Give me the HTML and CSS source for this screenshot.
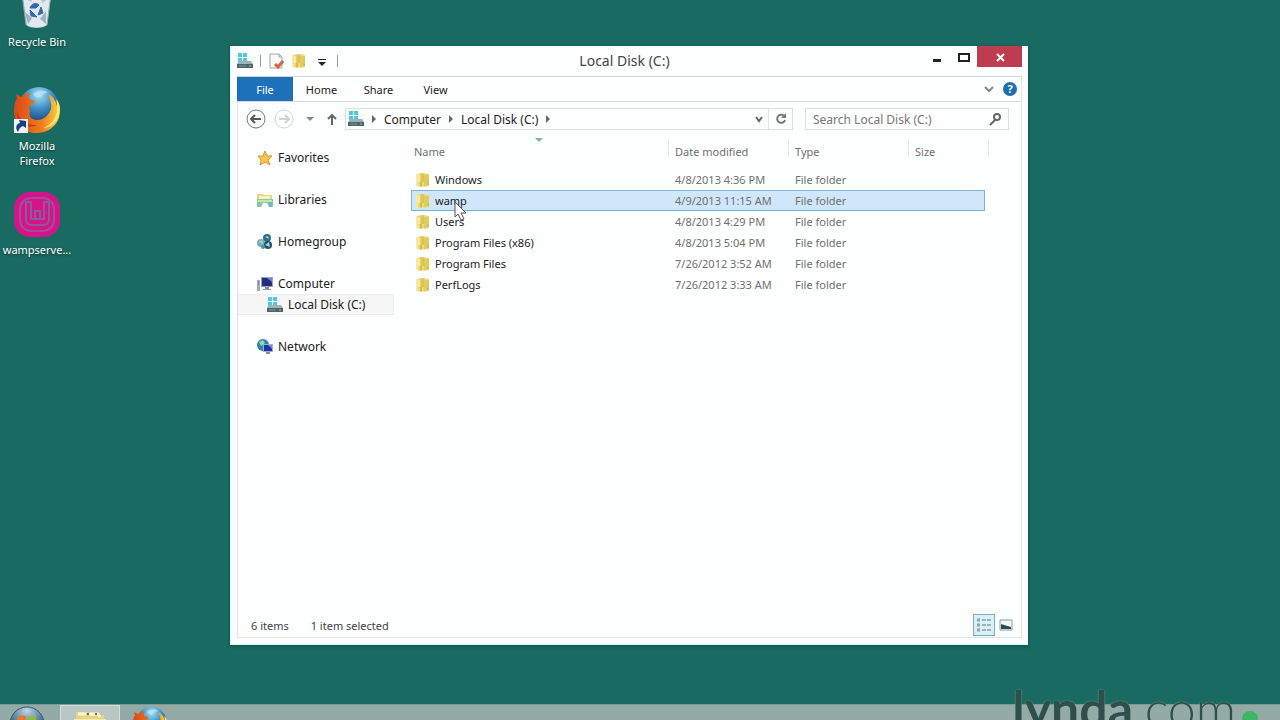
FILE: index.html
```html
<!DOCTYPE html>
<html lang="en">
<head>
    <meta charset="UTF-8">
    <meta name="viewport" content="width=device-width, initial-scale=1.0">
    <title>Local Disk (C:)</title>
    <link rel="stylesheet" href="styles.css">
</head>
<body>
    <!-- shared icons -->
    <svg class="sprite" aria-hidden="true">
        <defs>
            <linearGradient id="gold" x1="0" x2="1">
                <stop offset="0" stop-color="#f8efae"/>
                <stop offset="1" stop-color="#dfc64f"/>
            </linearGradient>
            <linearGradient id="fox" x1="0" x2="1">
                <stop offset="0" stop-color="#d9481a"/>
                <stop offset="0.6" stop-color="#ef7d1c"/>
                <stop offset="1" stop-color="#f8d447"/>
            </linearGradient>
            <radialGradient id="globe" cx="0.5" cy="0.2" r="0.8">
                <stop offset="0" stop-color="#a9e0f5"/>
                <stop offset="0.45" stop-color="#3b8cc4"/>
                <stop offset="1" stop-color="#0d2c66"/>
            </radialGradient>
            <radialGradient id="orb" cx="0.5" cy="0.1" r="0.9">
                <stop offset="0" stop-color="#c3d6e0"/>
                <stop offset="0.5" stop-color="#56809c"/>
                <stop offset="1" stop-color="#12375c"/>
            </radialGradient>
        </defs>
        <symbol id="i-disk" viewBox="0 0 16 16">
            <path d="M1 0h4v4H1zM6 0h4v4H6zM1 5h4v4H1zM6 5h4v4H6z" fill="#4cc9e6"/>
            <path d="M2 8h12l2 3H0z" fill="#9fb2b8"/>
            <path d="M0 11h16v4H0z" fill="#4f646b"/>
            <path d="M2 13h7" stroke="#7f979e"/>
            <path d="M12 13h2" stroke="#67e08a"/>
        </symbol>
        <symbol id="i-folder" viewBox="0 0 16 16">
            <path d="M1 2l6-1v14l-6-1z" fill="url(#gold)"/>
            <path d="M7 3l2-2 5 1v12l-5 1-2-1z" fill="#ecd978"/>
            <path d="M9 3v11l5-1V3z" fill="#e3cb5b"/>
            <path d="M8 1v9M6 10v4" stroke="#c9ac39"/>
            <path d="M4 3v7" stroke="#fffad7"/>
            <path d="M13 10v3" stroke="#93b7a3"/>
        </symbol>
        <symbol id="i-firefox" viewBox="0 0 48 48">
            <circle cx="26" cy="21" r="20" fill="url(#globe)"/>
            <path d="M20 8c4-4 11-5 15-1-4 0-5 2-8 4-3 1-5 0-7-3z" fill="#bfe6f3" opacity="0.7"/>
            <path d="M3 8l5 3c3-3 7-4 10-4-2 2-3 4-2 6l6 2c-1 3-4 4-6 6l1 5c-2 3 1 8 7 8 7 0 12-5 14-11 1-6-1-10-3-15 6 3 8 8 9 12 0-2 0-4-1-6 4 6 5 14 2 20-4 9-13 13-22 13C10 47 1 38 1 25c0-6 1-11 3-12z" fill="url(#fox)"/>
            <path d="M43 13c4 12-1 25-13 29 7 0 14-5 16-13 2-6 1-12-3-16z" fill="#ffe66e"/>
            <path d="M4 25c2 9 10 15 20 14-7 4-18 0-20-8z" fill="#c6391a"/>
        </symbol>
    </svg>

    <main class="desktop">
        <nav class="shortcuts" aria-label="Desktop">
            <a class="shortcut" href="#">
                <svg class="shortcut-icon" viewBox="0 0 48 48" aria-hidden="true">
                    <path d="M8 4h31l-5 39c-4 4-17 4-21 0z" fill="#b4c6d2"/>
                    <path d="M10 15l8 5 5-8 7 9 8-7-4 29c-5 3-16 3-20 0z" fill="#e0e9ef"/>
                    <path d="M12 30l7 6-4 6zM33 29l-6 8 6 5z" fill="#9fb3bf"/>
                    <path d="M17 26c1-4 6-6 9-3l-3 3zM28 25l2 6-5 2zM24 35l-6-1-1-6z" fill="#3569b4" stroke="#3569b4"/>
                    <path d="M8 4l5 39M39 4l-5 39" stroke="#8aa3ad" fill="none"/>
                </svg>
                <span>Recycle Bin</span>
            </a>
            <a class="shortcut" href="#">
                <svg class="shortcut-icon" viewBox="0 0 48 48" aria-hidden="true">
                    <use href="#i-firefox"/>
                    <path d="M1 33h14v14H1z" fill="#eef3f7"/>
                    <path d="M5 46c-3-4-2-8 2-9l-1-3 7 1v7l-3-2c-3 1-4 3-5 6z" fill="#1d3f7c"/>
                </svg>
                <span>Mozilla<br>Firefox</span>
            </a>
            <a class="shortcut" href="#">
                <svg class="shortcut-icon" viewBox="0 0 48 48" aria-hidden="true">
                    <rect x="1" y="2" width="46" height="45" rx="16" fill="#d5148c"/>
                    <rect x="7" y="8" width="34" height="33" rx="11" fill="none" stroke="#a44d96" stroke-width="2"/>
                    <path d="M13 12v17c0 4 2 6 6 6h11c4 0 6-2 6-6V12h-5v17H18V12zM22 29v-8h5v8" fill="none" stroke="#8a5b94" stroke-width="2"/>
                </svg>
                <span>wampserve...</span>
            </a>
        </nav>

        <section class="window">
            <header class="titlebar">
                <div class="quick">
                    <svg class="icon" aria-hidden="true"><use href="#i-disk"/></svg>
                    <i class="bar"></i>
                    <button class="plain" aria-label="Properties">
                        <svg class="icon" viewBox="0 0 16 16" aria-hidden="true">
                            <path d="M2 1h9l3 3v11H2z" fill="#fafafa" stroke="#a5a5a5"/>
                            <path d="M11 1v3h3" fill="none" stroke="#a5a5a5"/>
                            <path d="M7 11l3 3 5-6" fill="none" stroke="#d8654c" stroke-width="3"/>
                        </svg>
                    </button>
                    <button class="plain" aria-label="New folder">
                        <svg class="icon" aria-hidden="true"><use href="#i-folder"/></svg>
                    </button>
                    <button class="plain" aria-label="Customize toolbar">
                        <svg class="icon" viewBox="0 0 16 16" aria-hidden="true">
                            <path d="M4 6h8v1H4zM4 9h8l-4 4z" fill="#222"/>
                        </svg>
                    </button>
                    <i class="bar"></i>
                </div>
                <h1>Local Disk (C:)</h1>
                <div class="controls">
                    <button class="plain" aria-label="Minimize">
                        <svg class="icon" viewBox="0 0 16 16" aria-hidden="true"><path d="M4 9h8v3H4z" fill="#222"/></svg>
                    </button>
                    <button class="plain" aria-label="Maximize">
                        <svg class="icon" viewBox="0 0 16 16" aria-hidden="true"><path d="M3 4h10v7H3z" fill="none" stroke="#222" stroke-width="2"/></svg>
                    </button>
                    <button class="close" aria-label="Close">
                        <svg class="icon" viewBox="0 0 16 16" aria-hidden="true"><path d="M5 5l7 7M12 5l-7 7" stroke="#fff" stroke-width="2"/></svg>
                    </button>
                </div>
            </header>

            <div class="frame">
                <div class="ribbon">
                    <button class="tab file">File</button>
                    <button class="tab">Home</button>
                    <button class="tab">Share</button>
                    <button class="tab">View</button>
                    <div class="ribbon-end">
                        <button class="plain" aria-label="Expand the ribbon">
                            <svg class="icon" viewBox="0 0 16 16" aria-hidden="true"><path d="M4 6l4 4 4-4" fill="none" stroke="#888" stroke-width="2"/></svg>
                        </button>
                        <button class="help" aria-label="Help">?</button>
                    </div>
                </div>

                <div class="location">
                    <button class="plain" aria-label="Back">
                        <svg class="round" viewBox="0 0 20 20" aria-hidden="true">
                            <circle cx="10" cy="10" r="9" fill="none" stroke="#777"/>
                            <path d="M15 10H6M9 6l-4 4 4 4" fill="none" stroke="#555" stroke-width="2"/>
                        </svg>
                    </button>
                    <button class="plain" aria-label="Forward" disabled>
                        <svg class="round" viewBox="0 0 20 20" aria-hidden="true">
                            <circle cx="10" cy="10" r="9" fill="none" stroke="#d6d6d6"/>
                            <path d="M5 10h9M11 6l4 4-4 4" fill="none" stroke="#d2d2d2" stroke-width="2"/>
                        </svg>
                    </button>
                    <button class="plain" aria-label="Recent locations">
                        <svg class="icon" viewBox="0 0 16 16" aria-hidden="true"><path d="M4 6h8l-4 4z" fill="#888"/></svg>
                    </button>
                    <button class="plain" aria-label="Up">
                        <svg class="icon" viewBox="0 0 16 16" aria-hidden="true"><path d="M8 14V4M4 8l4-4 4 4" fill="none" stroke="#666" stroke-width="2"/></svg>
                    </button>
                    <div class="address">
                        <svg class="icon" aria-hidden="true"><use href="#i-disk"/></svg>
                        <svg class="arrow" viewBox="0 0 8 8" aria-hidden="true"><path d="M2 0l4 4-4 4z" fill="#666"/></svg>
                        <a href="#">Computer</a>
                        <svg class="arrow" viewBox="0 0 8 8" aria-hidden="true"><path d="M2 0l4 4-4 4z" fill="#666"/></svg>
                        <a href="#">Local Disk (C:)</a>
                        <svg class="arrow" viewBox="0 0 8 8" aria-hidden="true"><path d="M2 0l4 4-4 4z" fill="#666"/></svg>
                        <button class="plain history" aria-label="Previous locations">
                            <svg class="icon" viewBox="0 0 16 16" aria-hidden="true"><path d="M5 6l3 4 3-4" fill="none" stroke="#666" stroke-width="2"/></svg>
                        </button>
                        <button class="refresh" aria-label="Refresh">
                            <svg class="icon" viewBox="0 0 16 16" aria-hidden="true">
                                <path d="M11 5a4 4 0 1 0 1 4" fill="none" stroke="#777" stroke-width="2"/>
                                <path d="M13 2v5H8z" fill="#777"/>
                            </svg>
                        </button>
                    </div>
                    <div class="search">
                        <input type="text" placeholder="Search Local Disk (C:)" aria-label="Search Local Disk (C:)">
                        <svg class="icon" viewBox="0 0 16 16" aria-hidden="true">
                            <circle cx="10" cy="6" r="3" fill="none" stroke="#666" stroke-width="2"/>
                            <path d="M8 9l-5 5" stroke="#666" stroke-width="2"/>
                        </svg>
                    </div>
                </div>

                <div class="content">
                    <nav class="tree" aria-label="Navigation pane">
                        <a href="#">
                            <svg class="icon" viewBox="0 0 16 16" aria-hidden="true">
                                <path d="M8 1l2 5 5 0-4 4 2 5-5-3-5 3 1-5-3-4 5 0z" fill="#f9c74c" stroke="#dc9333"/>
                            </svg>
                            Favorites
                        </a>
                        <a href="#">
                            <svg class="icon" viewBox="0 0 16 16" aria-hidden="true">
                                <path d="M0 2h6l1 1h8v5H0z" fill="#e9d77a"/>
                                <path d="M2 4h11v3H2z" fill="#f8f3c6"/>
                                <path d="M0 7h16v8h-4l-2-4H6l-2 4H0z" fill="#8fc79b"/>
                                <path d="M1 8h14v2H1z" fill="#c7e6b8"/>
                                <path d="M12 10h3v5h-3z" fill="#75b9cc"/>
                            </svg>
                            Libraries
                        </a>
                        <a href="#">
                            <svg class="icon" viewBox="0 0 16 16" aria-hidden="true">
                                <circle cx="10" cy="4" r="4" fill="#356b8e"/>
                                <circle cx="4" cy="9" r="4" fill="#78aeb2"/>
                                <circle cx="11" cy="11" r="4" fill="#234f68"/>
                                <path d="M8 3l3-1 1 3zM2 8l3-2 1 4zM8 11l4-3 1 5z" fill="#a0d9d5"/>
                                <circle cx="6" cy="13" r="2" fill="#49969c"/>
                            </svg>
                            Homegroup
                        </a>
                        <a href="#" class="joined">
                            <svg class="icon" viewBox="0 0 16 16" aria-hidden="true">
                                <path d="M0 4h3v11H0z" fill="#a5a9bd"/>
                                <path d="M1 6h1M1 8h1" stroke="#5c617e"/>
                                <path d="M4 1h12v10H4z" fill="#99a2bf"/>
                                <path d="M5 2h10v8H5z" fill="#242d83"/>
                                <path d="M10 2h5v4z" fill="#6c86d4"/>
                                <path d="M8 11h4v2h2v1H6v-1h2z" fill="#8b92a9"/>
                            </svg>
                            Computer
                        </a>
                        <a href="#" class="drive" aria-current="true">
                            <svg class="icon" aria-hidden="true"><use href="#i-disk"/></svg>
                            Local Disk (C:)
                        </a>
                        <a href="#">
                            <svg class="icon" viewBox="0 0 16 16" aria-hidden="true">
                                <circle cx="6" cy="6" r="6" fill="#2d85a7"/>
                                <path d="M2 3l4-2 2 3-4 3zM2 9l3 2z" fill="#8fd4b6"/>
                                <path d="M6 5h10v8H6z" fill="#9bb2d3"/>
                                <path d="M7 6h8v6H7z" fill="#1f3596"/>
                                <path d="M11 6h4v4z" fill="#6b8ae0"/>
                                <path d="M9 13h4v2H9z" fill="#7d8da8"/>
                            </svg>
                            Network
                        </a>
                    </nav>

                    <div class="files">
                        <table>
                            <thead>
                                <tr>
                                    <th class="col-name">Name
                                        <svg class="sort" viewBox="0 0 8 4" aria-hidden="true"><path d="M0 0h8L4 4z" fill="#86aebe"/></svg>
                                    </th>
                                    <th class="col-date">Date modified</th>
                                    <th class="col-type">Type</th>
                                    <th>Size</th>
                                </tr>
                            </thead>
                            <tbody>
                                <tr>
                                    <td><svg class="icon" aria-hidden="true"><use href="#i-folder"/></svg>Windows</td>
                                    <td>4/8/2013 4:36 PM</td>
                                    <td>File folder</td>
                                    <td></td>
                                </tr>
                                <tr class="selected">
                                    <td><svg class="icon" aria-hidden="true"><use href="#i-folder"/></svg>wamp
                                        <svg class="pointer" viewBox="0 0 13 20" aria-hidden="true">
                                            <path d="M1 1v15l3-3 3 6 3-1-3-6h5z" fill="#fff" stroke="#555"/>
                                        </svg>
                                    </td>
                                    <td>4/9/2013 11:15 AM</td>
                                    <td>File folder</td>
                                    <td></td>
                                </tr>
                                <tr>
                                    <td><svg class="icon" aria-hidden="true"><use href="#i-folder"/></svg>Users</td>
                                    <td>4/8/2013 4:29 PM</td>
                                    <td>File folder</td>
                                    <td></td>
                                </tr>
                                <tr>
                                    <td><svg class="icon" aria-hidden="true"><use href="#i-folder"/></svg>Program Files (x86)</td>
                                    <td>4/8/2013 5:04 PM</td>
                                    <td>File folder</td>
                                    <td></td>
                                </tr>
                                <tr>
                                    <td><svg class="icon" aria-hidden="true"><use href="#i-folder"/></svg>Program Files</td>
                                    <td>7/26/2012 3:52 AM</td>
                                    <td>File folder</td>
                                    <td></td>
                                </tr>
                                <tr>
                                    <td><svg class="icon" aria-hidden="true"><use href="#i-folder"/></svg>PerfLogs</td>
                                    <td>7/26/2012 3:33 AM</td>
                                    <td>File folder</td>
                                    <td></td>
                                </tr>
                            </tbody>
                        </table>
                    </div>
                </div>

                <footer class="status">
                    <span>6 items</span>
                    <span>1 item selected</span>
                    <div class="views">
                        <button class="view active" aria-label="Details view">
                            <svg class="icon" viewBox="0 0 16 16" aria-hidden="true">
                                <path d="M1 3h3M1 8h3M1 13h3" stroke="#8ba4ae" stroke-width="3"/>
                                <path d="M6 3h4M11 3h4M6 8h4M11 8h4M6 13h4M11 13h4" stroke="#54788c"/>
                            </svg>
                        </button>
                        <button class="view" aria-label="Large icons view">
                            <svg class="icon" viewBox="0 0 16 16" aria-hidden="true">
                                <path d="M2 3h12v10H2z" fill="#f2f8f8" stroke="#8b9b9e"/>
                                <path d="M3 7l3 1 7 2v2H3z" fill="#284b4d"/>
                            </svg>
                        </button>
                    </div>
                </footer>
            </div>
        </section>
    </main>

    <div class="taskbar">
        <button class="task" aria-label="Start">
            <svg class="task-icon" viewBox="0 0 36 36" aria-hidden="true">
                <circle cx="18" cy="18" r="17" fill="url(#orb)" stroke="#38566d"/>
                <path d="M8 12c3-3 6-3 9-2v8c-3-1-6-1-9 1z" fill="#e07a3a"/>
                <path d="M18 10c3 1 6 1 9-1v8c-3 2-6 2-9 1z" fill="#8cbb4a"/>
                <path d="M8 20c3-2 6-2 9-1v8c-3-1-6-1-9 1z" fill="#3c8fd0"/>
                <path d="M18 19c3 1 6 1 9-1v8c-3 2-6 2-9 1z" fill="#f0c63d"/>
            </svg>
        </button>
        <button class="task open" aria-label="File Explorer">
            <svg class="task-icon" viewBox="0 0 36 36" aria-hidden="true">
                <path d="M4 5h11l2 3h15v23H4z" fill="#e3d58a"/>
                <path d="M6 7h8M17 7h9l2 3" stroke="#fbf6cf" stroke-width="3" fill="none"/>
                <path d="M15 7h2M23 7h2" stroke="#7f6d2a" stroke-width="2"/>
                <path d="M2 12h32v20H2z" fill="#f4e9a6"/>
            </svg>
        </button>
        <button class="task" aria-label="Mozilla Firefox">
            <svg class="task-icon" aria-hidden="true"><use href="#i-firefox"/></svg>
        </button>
    </div>

    <div class="watermark"><b>lynda</b>.com<i class="dot"></i></div>
</body>
</html>
```
FILE: styles.css
```css
* {
    box-sizing: border-box;
}

body {
    margin: 0;
    height: 100vh;
    overflow: hidden;
    position: relative;
    display: flex;
    flex-direction: column;
    background: #196a60;
    font-family: "Noto Sans", "Open Sans", sans-serif;
    font-size: 12px;
    color: #222;
}

button,
input {
    font: inherit;
    color: inherit;
    border: 0;
    padding: 0;
    background: none;
}

a {
    color: inherit;
    text-decoration: none;
}

svg {
    display: block;
    flex: none;
}

.sprite {
    position: absolute;
    width: 0;
    height: 0;
}

.icon {
    width: 16px;
    height: 16px;
}

.round {
    width: 20px;
    height: 20px;
}

.arrow {
    width: 8px;
    height: 8px;
}

.desktop {
    flex: 1;
    position: relative;
}

/* desktop shortcuts */
.shortcuts {
    display: grid;
    grid-auto-rows: 104px;
    width: 74px;
    margin-top: -18px;
}

.shortcut {
    display: flex;
    flex-direction: column;
    align-items: center;
    gap: 4px;
    color: #fff;
    font-size: 11px;
    line-height: 15px;
    text-align: center;
    text-shadow: 0 1px 2px #0b3a35;
}

.shortcut-icon {
    width: 48px;
    height: 48px;
}

/* explorer window */
.window {
    position: absolute;
    top: 46px;
    right: 252px;
    bottom: 59px;
    left: 230px;
    display: flex;
    flex-direction: column;
    padding: 0 6px 6px;
    background: #fdfefe;
    border-left: 1px solid #d5fbf8;
    border-bottom: 1px solid #d5fbf8;
    box-shadow: 0 1px 3px #0d5048;
}

.titlebar {
    display: grid;
    grid-template-columns: 1fr auto 1fr;
    height: 30px;
}

.titlebar h1 {
    margin: 0;
    padding-right: 10px;
    font-size: 14px;
    font-weight: 400;
    line-height: 30px;
    color: #444;
}

.quick {
    display: flex;
    align-items: center;
    gap: 7px;
}

.bar {
    width: 1px;
    height: 12px;
    background: #999;
}

.controls {
    display: flex;
    align-items: flex-start;
    justify-content: flex-end;
    gap: 11px;
}

.controls .plain {
    padding-top: 4px;
}

.controls .close {
    width: 45px;
    height: 21px;
    margin-left: -6px;
    display: grid;
    place-items: center;
    background: #bf3c50;
}

.frame {
    flex: 1;
    display: flex;
    flex-direction: column;
    border: 1px solid #e3e3e3;
    border-top-color: #d4d4d4;
}

.ribbon {
    display: flex;
    height: 25px;
    border-bottom: 1px solid #d9d9d9;
    font-size: 11px;
}

.tab {
    width: 57px;
}

.tab.file {
    width: 56px;
    margin-left: -1px;
    background: #1d71bb;
    color: #fff;
}

.ribbon-end {
    display: flex;
    align-items: center;
    gap: 6px;
    margin-left: auto;
    padding-right: 4px;
}

.help {
    width: 14px;
    height: 14px;
    border-radius: 50%;
    background: #1b70ad;
    color: #fff;
    font-size: 11px;
    font-weight: 700;
    line-height: 14px;
}

.location {
    display: flex;
    align-items: center;
    height: 34px;
    padding: 0 12px 0 8px;
    gap: 8px;
}

.location .plain + .plain + .plain + .plain {
    margin-left: -2px;
}

.address {
    flex: 1;
    display: flex;
    align-items: center;
    gap: 6px;
    height: 22px;
    margin-left: -3px;
    padding-left: 2px;
    border: 1px solid #ddd;
}

.history {
    margin-left: auto;
}

.refresh {
    width: 24px;
    height: 20px;
    margin-left: -5px;
    display: grid;
    place-items: center;
    border-left: 1px solid #e2e2e2;
}

.search {
    flex: 0 0 202px;
    display: flex;
    align-items: center;
    height: 22px;
    margin-left: 4px;
    padding: 0 5px 0 7px;
    border: 1px solid #ddd;
}

.search input {
    flex: 1;
    min-width: 0;
    outline: 0;
}

.search input::placeholder {
    color: #777;
    opacity: 1;
}

/* navigation pane and file list */
.content {
    flex: 1;
    display: flex;
    gap: 17px;
    padding-top: 1px;
}

.tree {
    width: 156px;
    padding-top: 10px;
}

.tree a {
    display: flex;
    align-items: center;
    gap: 5px;
    height: 21px;
    margin-bottom: 21px;
    padding-left: 19px;
}

.tree a.joined {
    margin-bottom: 0;
}

.tree a.drive {
    padding-left: 29px;
    background: #f6f6f6;
    border: 1px solid #efefef;
    border-left: 0;
}

.files {
    flex: 1;
}

table {
    width: 574px;
    table-layout: fixed;
    border-collapse: collapse;
    font-size: 11px;
    color: #707070;
}

th {
    position: relative;
    height: 32px;
    padding: 0 0 4px 6px;
    font-weight: 400;
    text-align: left;
}

th:first-child {
    padding-left: 3px;
}

th::after {
    content: "";
    position: absolute;
    top: 2px;
    right: 0;
    width: 1px;
    height: 18px;
    background: #e6e6e6;
}

th:last-child::after {
    right: -4px;
}

.col-name {
    width: 258px;
}

.col-date,
.col-type {
    width: 120px;
}

.sort {
    position: absolute;
    top: 1px;
    left: 48%;
    width: 8px;
    height: 4px;
}

td {
    height: 21px;
    padding: 0 0 0 6px;
    line-height: 20px;
    white-space: nowrap;
}

td:first-child {
    position: relative;
    display: flex;
    align-items: center;
    gap: 4px;
    padding-left: 4px;
    color: #222;
}

.selected {
    background: #cfe6fb;
    outline: 1px solid #7fb3d3;
    outline-offset: -1px;
}

.pointer {
    position: absolute;
    top: 11px;
    left: 43px;
    z-index: 1;
    width: 13px;
    height: 20px;
}

.status {
    display: flex;
    align-items: center;
    gap: 22px;
    height: 24px;
    padding: 0 4px 0 13px;
    font-size: 11px;
    color: #444;
}

.views {
    display: flex;
    margin-left: auto;
}

.view {
    display: grid;
    place-items: center;
    width: 22px;
    height: 22px;
}

.view.active {
    background: #d9f0f8;
    border: 1px solid #7eacc0;
}

/* taskbar runs past the lower edge */
.taskbar {
    display: flex;
    flex: none;
    height: 40px;
    margin-bottom: -24px;
    background: #93aaa6;
    border-top: 1px solid #779b95;
}

.task {
    width: 60px;
    display: grid;
    justify-items: center;
    align-items: start;
    padding-top: 1px;
}

.task:first-child {
    padding-right: 6px;
}

.task.open {
    background: #b9c6c4;
    border: 1px solid #d5dedc;
}

.task-icon {
    width: 36px;
    height: 36px;
}

.watermark {
    position: absolute;
    top: 678px;
    right: 22px;
    font-family: Lato, sans-serif;
    font-size: 50px;
    font-weight: 300;
    line-height: 60px;
    color: #2f4f4d;
    text-shadow: 0 0 1px #a9bdba;
}

.watermark b {
    font-weight: 700;
}

.dot {
    display: inline-block;
    width: 16px;
    height: 16px;
    margin-left: 6px;
    border-radius: 50%;
    background: #3fb564;
}
```
